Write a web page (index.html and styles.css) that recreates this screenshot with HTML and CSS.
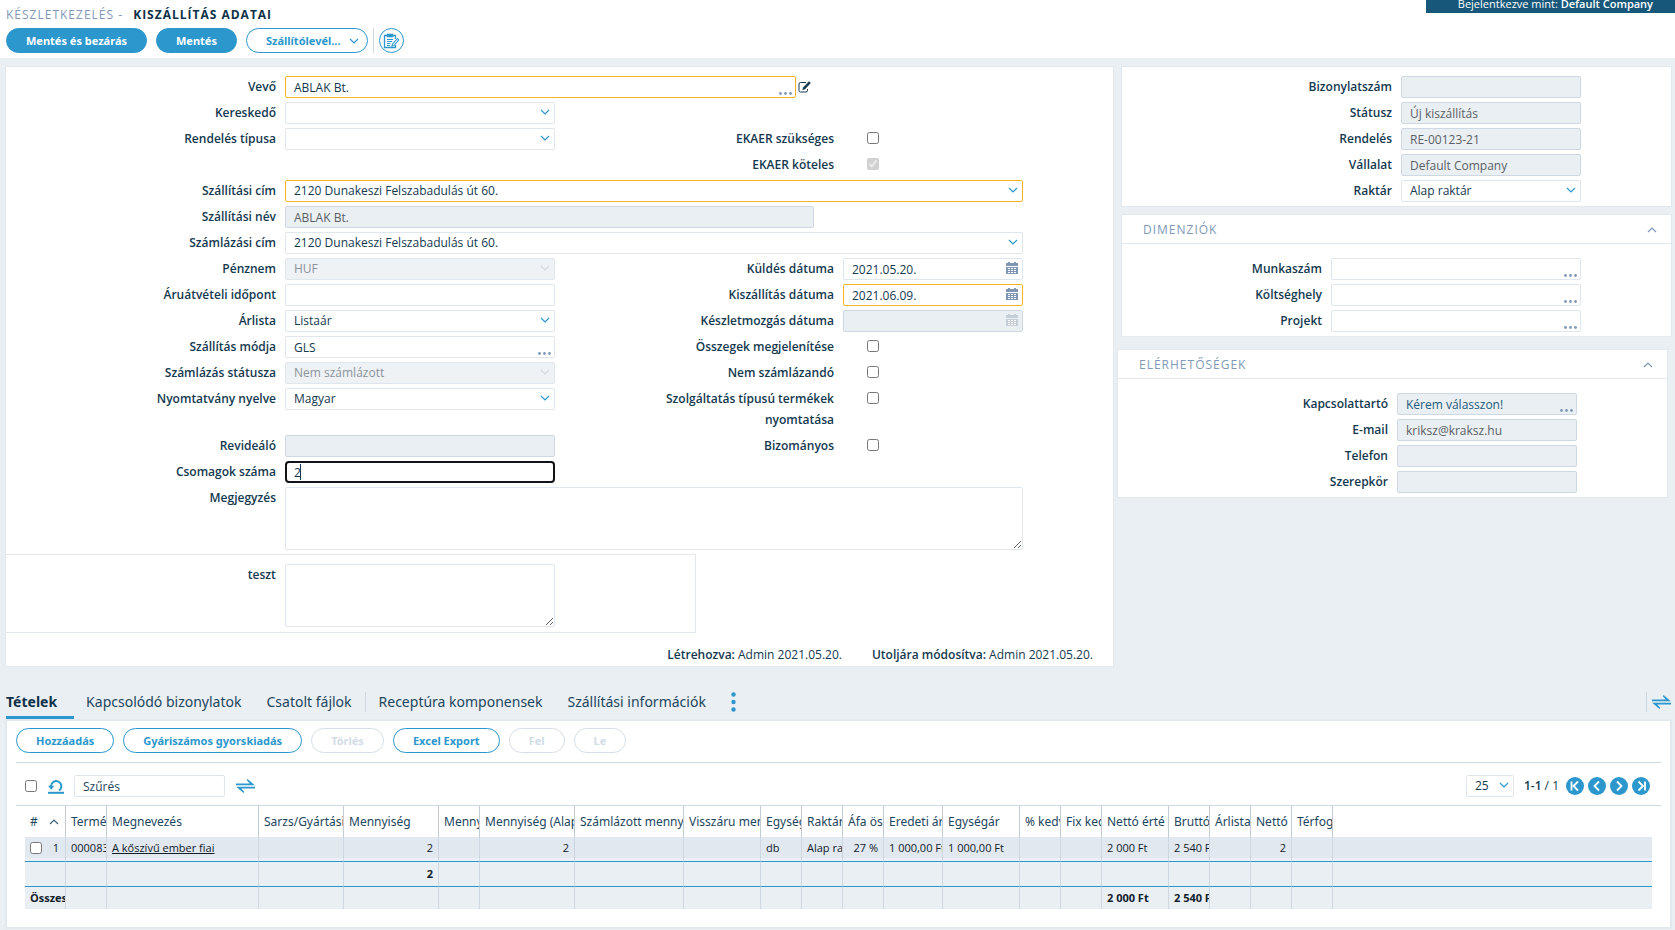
FILE: index.html
```html
<!DOCTYPE html>
<html lang="hu">
<head>
<meta charset="utf-8">
<title>Kiszállítás adatai</title>
<link rel="stylesheet" href="styles.css">
</head>
<body>
<svg class="sprite" aria-hidden="true">
  <symbol id="chevron" viewBox="0 0 10 6"><path d="M1 1l4 4 4-4" fill="none" stroke="currentColor" stroke-width="1.2"/></symbol>
  <symbol id="dots" viewBox="0 0 13 3"><circle cx="1.5" cy="1.5" r="1.4" fill="currentColor"/><circle cx="6.5" cy="1.5" r="1.4" fill="currentColor"/><circle cx="11.5" cy="1.5" r="1.4" fill="currentColor"/></symbol>
  <symbol id="calendar" viewBox="0 0 12 12"><path d="M2 0h2v1h4V0h2v1h2v3H0V1h2z" fill="currentColor"/><path d="M0 5h12v7H0z" fill="currentColor"/><path d="M2 6h2v1H2zM5 6h2v1H5zM8 6h2v1H8zM2 8h2v1H2zM5 8h2v1H5zM8 8h2v1H8zM2 10h2v1H2zM5 10h2v1H5zM8 10h2v1H8z" fill="#fff"/></symbol>
  <symbol id="swap" viewBox="0 0 19 14"><path d="M11.500 0l7.300 6.300H0V4.500h13.800L10.800 1.200zM7.500 14L.2 7.700H19v1.800H5.200l3 3.300z" fill="currentColor"/></symbol>
</svg>

<header class="topbar">
  <div class="company">Bejelentkezve mint: <b>Default Company</b></div>
  <h1 class="title"><span>KÉSZLETKEZELÉS -</span> <b>KISZÁLLÍTÁS ADATAI</b></h1>
  <div class="toolbar">
    <button class="btn solid">Mentés és bezárás</button>
    <button class="btn solid">Mentés</button>
    <button class="btn menu">Szállítólevél... <svg class="chev"><use href="#chevron"/></svg></button>
    <span class="sep"></span>
    <button class="round" aria-label="Jegyzet">
      <svg viewBox="0 0 16 16" fill="none" stroke="currentColor"><path d="M4 2.500H1.500v12h11V12M12.500 6V2.500H10" stroke-width="1.300"/><path d="M4.500 1.500h5v2h-5z" fill="currentColor" stroke-width="1.400"/><path d="M4 6.500h6M4 8.500h5M4 10.500h3.500M4 12.500h3" stroke-width="1"/><path d="M14.500 5.500l-5 5.500-.6 2.200 2.200-.8 4.600-5.400z" fill="#fff" stroke-width="1.100"/></svg>
    </button>
  </div>
</header>

<main>
<div class="forms">
  <form class="panel main-form">
    <div class="grid five">
      <label for="vevo">Vevő</label>
      <div class="span-vevo inline">
        <div class="field warn"><input id="vevo" value="ABLAK Bt."><button type="button" class="pick" aria-label="Vevő választása"><svg><use href="#dots"/></svg></button></div>
        <a href="#" class="edit" aria-label="Szerkesztés"><svg viewBox="0 0 13 12" fill="none" stroke="currentColor"><path d="M8 1.500H2.500Q1 1.500 1 3v6.500Q1 11 2.500 11H8q1.500 0 1.500-1.500V8" stroke-width="1"/><path d="M11 .5l1.500 1.500L7 8l-2.300.8L5.300 6.500z" fill="currentColor" stroke-width=".5"/></svg></a>
      </div>
      <label for="ker">Kereskedő</label>
      <div class="field"><select id="ker"><option></option></select><svg class="chev"><use href="#chevron"/></svg></div>
      <label for="rtip">Rendelés típusa</label>
      <div class="field"><select id="rtip"><option></option></select><svg class="chev"><use href="#chevron"/></svg></div>
      <label for="eks" class="second">EKAER szükséges</label>
      <div class="check"><input type="checkbox" id="eks"></div>
      <label for="ekk" class="second">EKAER köteles</label>
      <div class="check"><input type="checkbox" id="ekk" checked disabled></div>
      <label for="szc">Szállítási cím</label>
      <div class="field warn wide"><select id="szc"><option>2120 Dunakeszi Felszabadulás út 60.</option></select><svg class="chev"><use href="#chevron"/></svg></div>
      <label for="szn">Szállítási név</label>
      <div class="span-vevo"><div class="field name"><input id="szn" value="ABLAK Bt." readonly></div></div>
      <label for="smc">Számlázási cím</label>
      <div class="field wide"><select id="smc"><option>2120 Dunakeszi Felszabadulás út 60.</option></select><svg class="chev"><use href="#chevron"/></svg></div>
      <label for="pn">Pénznem</label>
      <div class="field"><select id="pn" disabled><option>HUF</option></select><svg class="chev off"><use href="#chevron"/></svg></div>
      <label for="kd" class="second">Küldés dátuma</label>
      <div class="field"><input id="kd" value="2021.05.20."><svg class="cal"><use href="#calendar"/></svg></div>
      <label for="ai">Áruátvételi időpont</label>
      <div class="field"><input id="ai"></div>
      <label for="kid" class="second">Kiszállítás dátuma</label>
      <div class="field warn"><input id="kid" value="2021.06.09."><svg class="cal"><use href="#calendar"/></svg></div>
      <label for="al">Árlista</label>
      <div class="field"><select id="al"><option>Listaár</option></select><svg class="chev"><use href="#chevron"/></svg></div>
      <label for="kmd" class="second">Készletmozgás dátuma</label>
      <div class="field"><input id="kmd" readonly><svg class="cal off"><use href="#calendar"/></svg></div>
      <label for="szm">Szállítás módja</label>
      <div class="field"><input id="szm" value="GLS"><button type="button" class="pick" aria-label="Szállítás módja választása"><svg><use href="#dots"/></svg></button></div>
      <label for="om" class="second">Összegek megjelenítése</label>
      <div class="check"><input type="checkbox" id="om"></div>
      <label for="szs">Számlázás státusza</label>
      <div class="field"><select id="szs" disabled><option>Nem számlázott</option></select><svg class="chev off"><use href="#chevron"/></svg></div>
      <label for="nsz" class="second">Nem számlázandó</label>
      <div class="check"><input type="checkbox" id="nsz"></div>
      <label for="nyn">Nyomtatvány nyelve</label>
      <div class="field"><select id="nyn"><option>Magyar</option></select><svg class="chev"><use href="#chevron"/></svg></div>
      <label for="szt" class="second">Szolgáltatás típusú termékek nyomtatása</label>
      <div class="check"><input type="checkbox" id="szt"></div>
      <label for="rev">Revideáló</label>
      <div class="field"><input id="rev" readonly></div>
      <label for="biz" class="second">Bizományos</label>
      <div class="check"><input type="checkbox" id="biz"></div>
      <label for="cs">Csomagok száma</label>
      <div class="field active"><input id="cs" value="2"><span class="caret"></span></div>
      <label for="megj">Megjegyzés</label>
      <div class="field area wide"><textarea id="megj"></textarea></div>
    </div>
    <div class="custom">
      <label for="teszt">teszt</label>
      <div class="field area"><textarea id="teszt"></textarea></div>
    </div>
    <div class="audit">
      <span><b>Létrehozva:</b> Admin 2021.05.20.</span>
      <span><b>Utoljára módosítva:</b> Admin 2021.05.20.</span>
    </div>
  </form>

  <div class="side">
    <section class="panel">
      <div class="grid three">
        <label for="bsz">Bizonylatszám</label><div class="field"><input id="bsz" readonly></div>
        <label for="st">Státusz</label><div class="field"><input id="st" value="Új kiszállítás" readonly></div>
        <label for="rd">Rendelés</label><div class="field"><input id="rd" value="RE-00123-21" readonly></div>
        <label for="vl">Vállalat</label><div class="field"><input id="vl" value="Default Company" readonly></div>
        <label for="rk">Raktár</label><div class="field"><select id="rk"><option>Alap raktár</option></select><svg class="chev"><use href="#chevron"/></svg></div>
      </div>
    </section>
    <section class="panel">
      <h2>DIMENZIÓK <svg class="chev up"><use href="#chevron"/></svg></h2>
      <div class="grid three dims">
        <label for="ms">Munkaszám</label><div class="field"><input id="ms"><button type="button" class="pick" aria-label="Munkaszám választása"><svg><use href="#dots"/></svg></button></div>
        <label for="kh">Költséghely</label><div class="field"><input id="kh"><button type="button" class="pick" aria-label="Költséghely választása"><svg><use href="#dots"/></svg></button></div>
        <label for="pr">Projekt</label><div class="field"><input id="pr"><button type="button" class="pick" aria-label="Projekt választása"><svg><use href="#dots"/></svg></button></div>
      </div>
    </section>
    <section class="panel contacts">
      <h2>ELÉRHETŐSÉGEK <svg class="chev up"><use href="#chevron"/></svg></h2>
      <div class="grid three">
        <label for="kt">Kapcsolattartó</label><div class="field"><input id="kt" class="hint" value="Kérem válasszon!" readonly><button type="button" class="pick" aria-label="Kapcsolattartó választása"><svg><use href="#dots"/></svg></button></div>
        <label for="em">E-mail</label><div class="field"><input id="em" value="kriksz@kraksz.hu" readonly></div>
        <label for="tel">Telefon</label><div class="field"><input id="tel" readonly></div>
        <label for="szk">Szerepkör</label><div class="field"><input id="szk" readonly></div>
      </div>
    </section>
  </div>
</div>

<nav class="tabs">
  <a href="#" class="on">Tételek</a>
  <a href="#">Kapcsolódó bizonylatok</a>
  <a href="#">Csatolt fájlok</a>
  <span class="tab-sep"></span>
  <a href="#">Receptúra komponensek</a>
  <a href="#">Szállítási információk</a>
  <button class="more" aria-label="További fülek"><svg viewBox="0 0 5 20"><circle cx="2.500" cy="2.500" r="2.200"/><circle cx="2.500" cy="10" r="2.200"/><circle cx="2.500" cy="17.500" r="2.200"/></svg></button>
  <button class="swap end" aria-label="Fülek rendezése"><svg><use href="#swap"/></svg></button>
</nav>

<section class="items">
  <div class="actions">
    <button class="btn">Hozzáadás</button>
    <button class="btn">Gyáriszámos gyorskiadás</button>
    <button class="btn" disabled>Törlés</button>
    <button class="btn">Excel Export</button>
    <button class="btn" disabled>Fel</button>
    <button class="btn" disabled>Le</button>
  </div>
  <div class="filter">
    <input type="checkbox" aria-label="Összes kijelölése">
    <button class="reset" aria-label="Visszaállítás"><svg viewBox="0 0 16 15" fill="none" stroke="currentColor" stroke-width="2"><path d="M0 13.800h16"/><path d="M3 8V7a5.200 5.200 0 1 1 9.500 3.200L11 11.500" stroke-width="2"/><path d="M0 6.800h6.400L3.200 10.800z" fill="currentColor" stroke="none"/></svg></button>
    <div class="field search"><input aria-label="Szűrés" placeholder="Szűrés"></div>
    <button class="swap" aria-label="Oszlopok"><svg><use href="#swap"/></svg></button>
    <div class="pager">
      <div class="field size"><select aria-label="Sorok száma"><option>25</option></select><svg class="chev"><use href="#chevron"/></svg></div>
      <span class="range"><b>1-1</b> / 1</span>
      <button aria-label="Első"><svg viewBox="0 0 18 18"><path d="M5.500 4.500v9M12 4.500L7.500 9l4.500 4.500"/></svg></button>
      <button aria-label="Előző"><svg viewBox="0 0 18 18"><path d="M11 4.500L6.500 9l4.500 4.500"/></svg></button>
      <button aria-label="Következő"><svg viewBox="0 0 18 18"><path d="M7 4.500L11.500 9 7 13.500"/></svg></button>
      <button aria-label="Utolsó"><svg viewBox="0 0 18 18"><path d="M13 4.500v9M6.500 4.500L11 9l-4.500 4.500"/></svg></button>
    </div>
  </div>
  <div class="table-box">
  <table>
    <colgroup><col class="s"><col class="s"><col class="c152"><col class="c85"><col class="c95"><col class="s"><col class="c95"><col class="c109"><col class="c77"><col class="s"><col class="s"><col class="s"><col class="c59"><col class="c77"><col class="s"><col class="s"><col class="c67"><col class="s"><col class="s"><col class="s"><col class="s"><col></colgroup>
    <thead><tr><th><span class="idx"># <svg class="chev up"><use href="#chevron"/></svg></span></th><th>Termék</th><th>Megnevezés</th><th>Sarzs/Gyártási</th><th>Mennyiség</th><th>Menny.</th><th>Mennyiség (Alap)</th><th>Számlázott menny.</th><th>Visszáru menny.</th><th>Egység</th><th>Raktár</th><th>Áfa ös.</th><th>Eredeti ár</th><th>Egységár</th><th>% kedv.</th><th>Fix kedv.</th><th>Nettó érté</th><th>Bruttó</th><th>Árlista</th><th>Nettó</th><th>Térfogat</th><th></th></tr></thead>
    <tbody>
      <tr class="row"><td><span class="idx"><input type="checkbox" aria-label="1. sor"> 1</span></td><td>000083</td><td><a href="#">A kőszívű ember fiai</a></td><td></td><td class="r">2</td><td></td><td class="r">2</td><td></td><td></td><td>db</td><td>Alap raktár</td><td class="r">27 %</td><td>1 000,00 Ft</td><td>1 000,00 Ft</td><td></td><td></td><td>2 000 Ft</td><td>2 540 Ft</td><td></td><td class="r">2</td><td></td><td></td></tr>
      <tr class="sub"><td></td><td></td><td></td><td></td><td class="r">2</td><td></td><td></td><td></td><td></td><td></td><td></td><td></td><td></td><td></td><td></td><td></td><td></td><td></td><td></td><td></td><td></td><td></td></tr>
      <tr class="sum"><td>Összesen</td><td></td><td></td><td></td><td></td><td></td><td></td><td></td><td></td><td></td><td></td><td></td><td></td><td></td><td></td><td></td><td>2 000 Ft</td><td>2 540 Ft</td><td></td><td></td><td></td><td></td></tr>
    </tbody>
  </table>
  </div>
</section>
</main>
</body>
</html>
```
FILE: styles.css
```css
:root {
  --blue: #2b97cd;
  --ink: #14394f;
  --muted: #8199b8;
  --bg: #eaeff3;
  --line: #e1e8ee;
  --rule: #ced8e2;
}
* { box-sizing: border-box; }
body {
  margin: 0;
  background: var(--bg);
  color: var(--ink);
  font: 12px/20px "Open Sans", sans-serif;
}
button, input, select, textarea { font: inherit; color: inherit; margin: 0; }
button { cursor: pointer; }
b, label { font-weight: 600; }
svg { display: block; }
.sprite { position: absolute; width: 0; height: 0; }

/* top bar */
.topbar { background: #fff; height: 58px; padding: 5px 6px 0; position: relative; }
.company {
  position: absolute; top: 0; right: 0; width: 249px; height: 13px;
  background: #17587a; color: #fff; overflow: hidden;
  text-align: right; padding-right: 22px; font-size: 11px; line-height: 8px;
}
.title { margin: 0 0 3px; font-size: 12px; line-height: 20px; font-weight: 400; letter-spacing: 1px; color: var(--muted); }
.title b { color: #0e3248; font-weight: 700; margin-left: 6px; }
.toolbar, .actions { display: flex; align-items: center; gap: 9px; }
.btn {
  height: 25px; padding: 0 19px; border: 1px solid var(--blue); border-radius: 13px;
  background: #fff; color: var(--blue); font: 700 11px/20px "Noto Sans", sans-serif; white-space: nowrap;
}
.btn.solid { background: var(--blue); color: #fff; }
.btn.menu { display: flex; align-items: center; gap: 8px; padding-right: 8px; }
.btn:disabled { color: #d2dde8; border-color: #d6dfe7; }
.sep { width: 1px; height: 25px; background: var(--rule); margin: 0 -4px; }
.round {
  width: 25px; height: 25px; padding: 0; border: 1px solid var(--blue); border-radius: 50%;
  background: #fff; color: var(--blue); display: grid; place-items: center;
}
.round svg { width: 16px; height: 16px; }
.chev { width: 10px; height: 6px; color: var(--blue); }
.chev.up { transform: rotate(180deg); color: var(--muted); }
th .chev.up { color: #3d627a; }

/* forms */
.forms { display: grid; grid-template-columns: 1109fr 551fr; gap: 7px; padding: 8px 3px 0 5px; align-items: start; }
.panel { background: #fff; border: 1px solid var(--line); }
.side { display: grid; gap: 7px; }
.grid { display: grid; grid-auto-rows: minmax(22px, auto); gap: 4px 9px; padding: 9px 0 4px; }
.five { grid-template-columns: 270fr 270fr 270fr 180fr 81fr; }
.grid > label { grid-column: 1; }
.grid > label.second { grid-column: 3; padding-left: 40px; }
.grid > .wide { grid-column: 2 / 5; }
.grid > .span-vevo { grid-column: 2 / 4; }
.span-vevo .name { width: calc(100% - 20px); }
.inline { display: flex; align-items: center; gap: 2px; }
.inline .field { flex: 1; }
.edit { width: 36px; color: #14394f; }
.edit svg { width: 13px; height: 12px; }
.three { grid-template-columns: 270fr 180fr 81fr; }
.dims { grid-template-columns: 200fr 250fr 81fr; }
label { text-align: right; line-height: 21px; padding-bottom: 1px; }
.field { position: relative; height: 22px; min-width: 0; }
.field input, .field select, .field textarea {
  display: block; width: 100%; height: 100%; padding: 0 8px; border: 1px solid #dfe7ee;
  border-radius: 2px; background: #fff; appearance: none; outline: 0;
}
.field input[readonly] { background: var(--bg); border-color: var(--rule); color: #5a5f66; }
.field input.hint { color: #1d5b7c; }
.field select:disabled { background: #eff2f5; color: #8b939b; opacity: 1; }
.field.warn input, .field.warn select { border-color: #fbb325; }
.field.active input { border: 2px solid #101418; border-radius: 4px; padding: 0 7px; }
.field.area { height: 63px; }
.field textarea { resize: both; }
.field .chev { position: absolute; right: 5px; top: 7px; pointer-events: none; }
.field .off { color: #d3dbe3; }
.caret { position: absolute; left: 15px; top: 3px; width: 1px; height: 16px; background: var(--ink); }
.pick { position: absolute; right: 1px; top: 1px; width: 19px; height: 20px; padding: 12px 3px 0; border: 0; background: none; color: var(--muted); }
.pick svg { width: 13px; height: 3px; }
.cal { position: absolute; right: 5px; top: 4px; width: 12px; height: 12px; color: #7f97b5; }
.field .cal.off { color: #c5ced6; }
input[type="checkbox"] { display: block; width: 12px; height: 12px; margin: 0; }
.check { padding: 4px 0 0 24px; }
.custom {
  display: grid; grid-template-columns: 270fr 270fr 131fr; column-gap: 9px; width: 62.3%;
  border: 1px solid var(--line); border-left: 0; padding: 9px 0 5px;
}
.audit { display: flex; justify-content: flex-end; gap: 30px; padding: 12px 20px 1px 0; }
h2 {
  display: flex; justify-content: space-between; align-items: center; height: 29px; margin: 0;
  padding: 2px 14px 0 21px; border-bottom: 1px solid var(--line);
  font-size: 12px; font-weight: 400; letter-spacing: 1px; color: var(--muted);
}
h2 + .grid { padding-top: 14px; }
.contacts { margin: 5px 4px 0 -4px; }

/* tabs */
.tabs { display: flex; align-items: center; height: 34px; margin: 18px 3px 0 6px; gap: 25px; font: 14px/20px "Noto Sans", sans-serif; }
.tabs a { color: #1d465e; text-decoration: none; height: 34px; line-height: 34px; }
.tabs a.on { font-weight: 700; color: #0e3248; border-bottom: 3px solid var(--blue); padding-right: 17px; margin-right: -13px; }
.tab-sep { width: 1px; height: 20px; background: var(--rule); margin: 0 -12px; }
.more { border: 0; background: none; padding: 0; fill: var(--blue); }
.more svg { width: 5px; height: 20px; }
.swap { border: 0; background: none; padding: 0; color: var(--blue); }
.swap svg { width: 19px; height: 14px; }
.swap.end { margin-left: auto; padding: 3px 1px 3px 5px; border-left: 1px solid var(--rule); }

/* items */
.items { margin: 0 3px 0 5px; background: #fff; border: 2px solid #e2e9ee; padding: 7px 9px 18px; }
.actions { padding-bottom: 9px; border-bottom: 1px solid var(--rule); }
.filter { display: flex; align-items: center; padding: 12px 11px 8px 9px; border-bottom: 1px solid var(--rule); }
.reset { width: 16px; height: 15px; margin: 0 10px 0 11px; padding: 0; border: 0; background: none; color: var(--blue); }
.reset svg { width: 16px; height: 15px; }
.search { width: 151px; margin-right: 11px; }
.search input::placeholder { color: #1d465e; opacity: 1; }
.pager { display: flex; align-items: center; gap: 4px; margin-left: auto; }
.size { width: 48px; margin-right: 6px; }
.range { margin-right: 3px; }
.pager button { width: 18px; height: 18px; padding: 0; border: 0; border-radius: 50%; background: var(--blue); }
.pager button svg { width: 18px; height: 18px; fill: none; stroke: #fff; stroke-width: 1.8; }
.table-box { padding: 0 9px; }
table { width: 100%; table-layout: fixed; border-collapse: separate; border-spacing: 0; }
.s { width: 41px; } .c59 { width: 59px; } .c67 { width: 67px; } .c77 { width: 77px; } .c85 { width: 85px; }
.c95 { width: 95px; } .c109 { width: 109px; } .c152 { width: 152px; }
th, td { padding: 0 0 0 5px; overflow: hidden; white-space: nowrap; text-align: left; border-right: 1px solid #cfd8e2; }
th { height: 31px; font: 12px/20px "Noto Sans", sans-serif; color: #1d465e; border-right-color: #c3ccd4; }
th:last-child, td:last-child { border-right: 0; }
td { background: var(--bg); color: #10202c; font-size: 11px; }
.row td { height: 25px; background: #e1e8ef; border-bottom: 1px solid var(--blue); box-shadow: inset 0 -3px var(--bg); padding-bottom: 3px; }
.sub td { height: 25px; border-bottom: 1px solid var(--blue); font-weight: 700; }
.sum td { height: 22px; font-weight: 700; }
td.r { text-align: right; padding-right: 5px; }
td a { color: #10202c; }
.idx { display: flex; align-items: center; justify-content: space-between; padding-right: 6px; }
```
